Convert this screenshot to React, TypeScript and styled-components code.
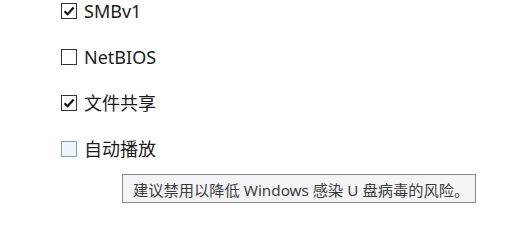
import styled, { createGlobalStyle } from "styled-components";

const GlobalStyle = createGlobalStyle`
    html, body {
        margin: 0;
        padding: 0;
        background: #ffffff;
    }
    body {
        font-family: "Noto Sans", "Noto Sans CJK SC", sans-serif;
    }
`;

const Page = styled.div`
    width: 515px;
    height: 247px;
    position: relative;
    overflow: hidden;
    background: #fff;
`;

const List = styled.div`
    display: flex;
    flex-direction: column;
    gap: 30px;
    padding: 3px 0 0 61px;
`;

const Row = styled.label`
    display: flex;
    align-items: center;
    gap: 7px;
    height: 16px;
    font-size: 18px;
    color: #1a1a1a;
`;

const Box = styled.span<{ $hover?: boolean }>`
    box-sizing: border-box;
    width: 16px;
    height: 16px;
    border: 1px solid ${(p) => (p.$hover ? "#7b9ed6" : "#333333")};
    background: ${(p) => (p.$hover ? "#eef5fd" : "#ffffff")};
    display: flex;
    align-items: center;
    justify-content: center;
`;

const Label = styled.span`
    line-height: 16px;
`;

const Tooltip = styled.div`
    position: absolute;
    left: 122px;
    top: 174px;
    box-sizing: border-box;
    width: 354px;
    height: 29px;
    padding: 0 0 0 10px;
    display: flex;
    align-items: center;
    background: #f4f4f6;
    border: 1px solid #8a8a8a;
    font-size: 15.25px;
    color: #3c3c3c;
    white-space: nowrap;
`;

const Check = () => (
    <svg width="12" height="12" viewBox="0 0 12 12">
        <path d="M1.5 6.2 L4.6 9.2 L10.6 2.6" fill="none" stroke="#111" strokeWidth="2.2" />
    </svg>
);

type Item = {
    label: string;
    checked: boolean;
    hover?: boolean;
};

const items: Item[] = [
    { label: "SMBv1", checked: true },
    { label: "NetBIOS", checked: false },
    { label: "文件共享", checked: true },
    { label: "自动播放", checked: false, hover: true },
];

const App = () => (
    <Page>
        <GlobalStyle />
        <List>
            {items.map((item) => (
                <Row key={item.label}>
                    <Box $hover={item.hover}>{item.checked && <Check />}</Box>
                    <Label>{item.label}</Label>
                </Row>
            ))}
        </List>
        <Tooltip>建议禁用以降低 Windows 感染 U 盘病毒的风险。</Tooltip>
    </Page>
);

export default App;
